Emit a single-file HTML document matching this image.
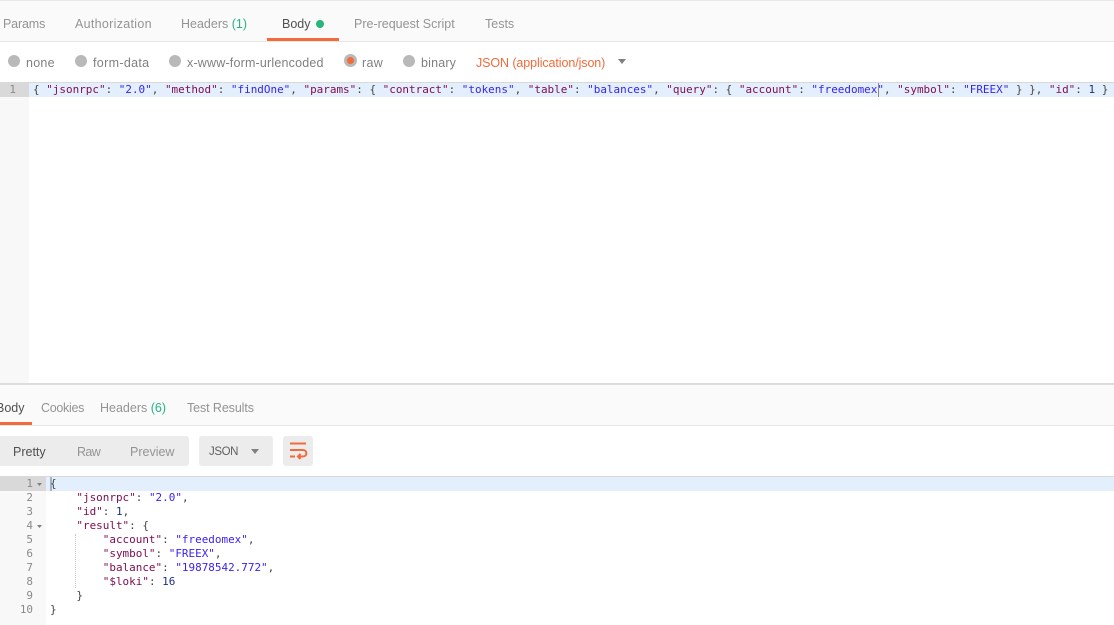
<!DOCTYPE html>
<html><head><meta charset="utf-8"><style>
html,body{margin:0;padding:0;background:#fff;}
body{width:1114px;height:625px;position:relative;overflow:hidden;font-family:"Liberation Sans",sans-serif;font-size:12.5px;color:#808080;}
.a{position:absolute;white-space:pre;line-height:16px;}
.t{color:#949494;}
.r{position:absolute;left:0;right:0;}
.g{color:#26b47f;}
.d{position:absolute;width:12px;height:12px;border-radius:50%;background:#b9b9b9;}
.m{position:absolute;white-space:pre;font-family:"DejaVu Sans Mono",monospace;font-size:10.96px;line-height:14px;color:#444;}
.k{color:#800e55;}.s{color:#3a22f0;}.n{color:#1c2f85;}
.ln{position:absolute;font-family:"DejaVu Sans Mono",monospace;font-size:10.95px;line-height:14px;color:#8a8a8a;text-align:right;white-space:pre;}
</style></head><body>
<div class="r" style="top:0;height:40px;background:#fafafa;border-top:1px solid #e8e8e8;border-bottom:1px solid #e6e6e6;box-sizing:content-box"></div>
<div class="a t" style="left:3px;top:16px;letter-spacing:-.15px">Params</div>
<div class="a t" style="left:75px;top:16px;letter-spacing:.3px">Authorization</div>
<div class="a t" style="left:181px;top:16px">Headers <span class="g">(1)</span></div>
<div class="a" style="left:282px;top:16px;color:#505050">Body</div>
<div style="position:absolute;left:316px;top:20px;width:8px;height:8px;border-radius:50%;background:#26b47f"></div>
<div class="a t" style="left:354px;top:16px">Pre-request Script</div>
<div class="a t" style="left:485px;top:16px">Tests</div>
<div style="position:absolute;left:267px;top:38px;height:3px;width:72px;background:#f26b3a"></div>

<div class="d" style="left:8px;top:54.500px"></div><div class="a" style="left:26px;top:55px;letter-spacing:.25px">none</div>
<div class="d" style="left:75px;top:54.500px"></div><div class="a" style="left:93px;top:55px;letter-spacing:.33px">form-data</div>
<div class="d" style="left:169px;top:54.500px"></div><div class="a" style="left:187px;top:55px;letter-spacing:.19px">x-www-form-urlencoded</div>
<div class="d" style="left:344px;top:54px;width:13px;height:13px"></div><div style="position:absolute;left:347px;top:57px;width:7px;height:7px;border-radius:50%;background:#f26b3a"></div><div class="a" style="left:362px;top:55px;letter-spacing:.3px">raw</div>
<div class="d" style="left:403px;top:54.500px"></div><div class="a" style="left:421px;top:55px;letter-spacing:.17px">binary</div>
<div class="a" style="left:476px;top:55px;color:#f26b3a;letter-spacing:-.09px">JSON (application/json)</div>
<svg style="position:absolute;left:617px;top:58px" width="10" height="7"><path d="M1 1H9L5 6Z" fill="#808080"/></svg>

<div class="r" style="top:82px;height:1px;background:#d9d9d9"></div>
<div style="position:absolute;left:0;top:83px;width:29px;height:300px;background:#f8f8f8"></div>
<div style="position:absolute;left:0;top:83px;width:29px;height:14px;background:#d9d9d9"></div>
<div style="position:absolute;left:29px;top:83px;right:0;height:14px;background:#e3effc"></div>
<div class="ln" style="left:0;top:83px;width:16px">1</div>
<div class="m" style="left:33px;top:83px">{ <span class="k">"jsonrpc"</span>: <span class="s">"2.0"</span>, <span class="k">"method"</span>: <span class="s">"findOne"</span>, <span class="k">"params"</span>: { <span class="k">"contract"</span>: <span class="s">"tokens"</span>, <span class="k">"table"</span>: <span class="s">"balances"</span>, <span class="k">"query"</span>: { <span class="k">"account"</span>: <span class="s">"freedomex"</span>, <span class="k">"symbol"</span>: <span class="s">"FREEX"</span> } }, <span class="k">"id"</span>: <span class="n">1</span> }</div>
<div style="position:absolute;left:878px;top:83px;width:1px;height:14px;background:#8a8a8a"></div>

<div class="r" style="top:383px;height:2px;background:#dcdcdc"></div>
<div class="r" style="top:385px;height:40px;background:#fafafa;border-bottom:1px solid #e6e6e6"></div>
<div class="a" style="left:-4px;top:400px;color:#505050">Body</div>
<div style="position:absolute;left:0;top:422px;width:32px;height:3px;background:#f26b3a"></div>
<div class="a t" style="left:41px;top:400px;letter-spacing:-.3px">Cookies</div>
<div class="a t" style="left:100px;top:400px">Headers <span class="g">(6)</span></div>
<div class="a t" style="left:187px;top:400px;letter-spacing:-.1px">Test Results</div>

<div style="position:absolute;left:-4px;top:436px;width:193px;height:30px;border-radius:3px;background:#ececec"></div>
<div class="a" style="left:13px;top:444px;color:#505050">Pretty</div>
<div class="a t" style="left:77px;top:444px;letter-spacing:-.6px">Raw</div>
<div class="a t" style="left:130px;top:444px">Preview</div>
<div style="position:absolute;left:199px;top:436px;width:74px;height:30px;border-radius:3px;background:#ececec"></div>
<div class="a" style="left:209px;top:444px;color:#606060;font-size:11.500px;letter-spacing:-.4px">JSON</div>
<svg style="position:absolute;left:250px;top:448px" width="10" height="7"><path d="M1 1H9L5 6Z" fill="#808080"/></svg>
<div style="position:absolute;left:283px;top:436px;width:30px;height:30px;border-radius:3px;background:#ececec"></div>
<svg style="position:absolute;left:283px;top:436px" width="30" height="30" fill="none" stroke="#f26b3a" stroke-width="2"><path d="M7 7.500H23M7 14H20C24.500 14 24.500 20.500 20 20.500H15M17.500 18L15 20.500L17.500 23M7 20.500H12"/></svg>

<div class="r" style="top:476px;height:1px;background:#d9d9d9"></div>
<div style="position:absolute;left:0;top:477px;width:46px;height:148px;background:#f8f8f8"></div>
<div style="position:absolute;left:0;top:477px;width:46px;height:14px;background:#d9d9d9"></div>
<div style="position:absolute;left:46px;top:477px;right:0;height:14px;background:#e3effc"></div>
<div style="position:absolute;left:50px;top:477px;width:2px;height:14px;background:#a3b2c4"></div>
<div class="ln" style="left:0;top:477px;width:33px;line-height:14px">1
2
3
4
5
6
7
8
9
10</div>
<svg style="position:absolute;left:36px;top:482px" width="7" height="5"><path d="M1 1H6L3.500 4Z" fill="#808080"/></svg>
<svg style="position:absolute;left:36px;top:524px" width="7" height="5"><path d="M1 1H6L3.500 4Z" fill="#808080"/></svg>
<div style="position:absolute;left:75px;top:534px;height:54px;border-left:1px dotted #c4c4c4"></div>
<div class="m" style="left:50px;top:477px">{
    <span class="k">"jsonrpc"</span>: <span class="s">"2.0"</span>,
    <span class="k">"id"</span>: <span class="n">1</span>,
    <span class="k">"result"</span>: {
        <span class="k">"account"</span>: <span class="s">"freedomex"</span>,
        <span class="k">"symbol"</span>: <span class="s">"FREEX"</span>,
        <span class="k">"balance"</span>: <span class="s">"19878542.772"</span>,
        <span class="k">"$loki"</span>: <span class="n">16</span>
    }
}</div>
</body></html>
